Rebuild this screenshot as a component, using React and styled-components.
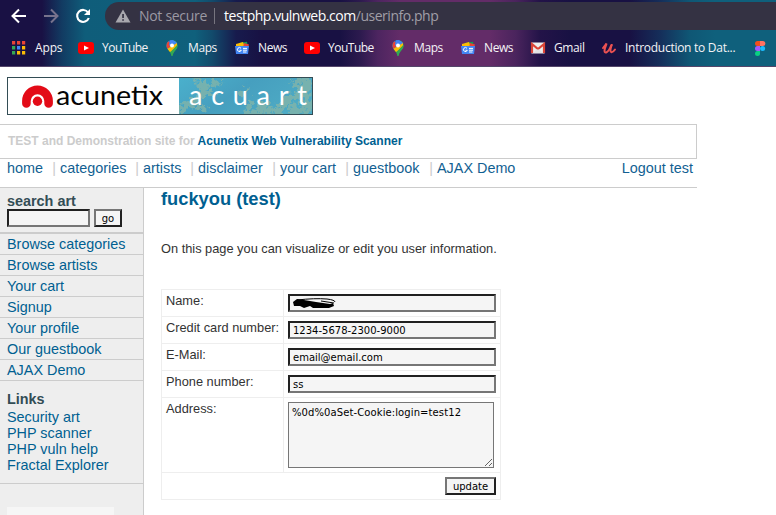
import React from "react";
import styled, { createGlobalStyle } from "styled-components";

const GlobalStyle = createGlobalStyle`
  * { box-sizing: border-box; }
  body { margin: 0; background: #fff; overflow: hidden; font-family: "Liberation Sans", Arial, sans-serif; }
`;

const Window = styled.div`
  width: 776px;
  height: 515px;
  overflow: hidden;
  display: flex;
  flex-direction: column;
`;

const Chrome = styled.header`
  flex: none;
  height: 67px;
  border-bottom: 1px solid #54466a;
  padding-top: 2px;
  background: linear-gradient(90deg, #191144 0, #191144 42px, #123b62 62px, #0f5d7a 85px, #0f607c 195px, #124b6c 212px, #171b4d 236px, #181143 262px, #181143 340px, #2c1a4e 360px, #4d2560 378px, #632c68 400px, #632c68 490px, #4a245d 516px, #231348 540px, #181143 570px, #181143 630px, #152e5a 660px, #0f5775 690px, #0f607c 715px, #0f607c 776px);
`;

const Toolbar = styled.div`
  display: flex;
  height: 28px;
`;

const NavButtons = styled.div`
  width: 105px;
  flex: none;
  display: grid;
  grid-template-columns: 32px 32px 32px;
  padding-left: 3px;
  align-items: center;
  justify-items: center;
`;

const AddressBar = styled.div`
  flex: 1;
  display: flex;
  align-items: center;
  padding-left: 10px;
  background: #343243;
  border-radius: 14px 0 0 14px;
  font: 14px/28px "Open Sans", "Noto Sans", sans-serif;
  white-space: nowrap;
`;

const SecurityLabel = styled.span`
  width: 75px;
  margin-left: 8px;
  color: #9b99a3;
  letter-spacing: -0.3px;
`;

const AddressDivider = styled.i`
  width: 1px;
  height: 16px;
  background: #77757f;
  margin-right: 9px;
`;

const Url = styled.span`
  color: #fff;
  letter-spacing: -0.47px;
`;

const UrlPath = styled.span`
  color: #a09ea7;
`;

const BookmarkBar = styled.nav`
  display: flex;
  height: 36px;
  padding-left: 11px;
`;

const Bookmark = styled.div`
  width: ${(p) => p.$width}px;
  flex: none;
  display: flex;
  align-items: center;
  gap: 8px;
  color: #f4f3f6;
  font: 12px/36px "Open Sans", "Noto Sans", sans-serif;
  letter-spacing: ${(p) => p.$tracking || 0}px;
  white-space: nowrap;
  svg { flex: none; }
`;

const Page = styled.div`
  flex: 1;
  display: flex;
  flex-direction: column;
  width: 697px;
  padding-top: 10px;
`;

const LogoLink = styled.div`
  height: 38px;
  margin: 0 0 9px 7px;
  flex: none;
  svg { display: block; }
`;

const Banner = styled.div`
  flex: none;
  height: 35px;
  border: 1px solid #ccc;
  border-left: 0;
  padding-left: 8px;
  font: bold 12px/33px "Liberation Sans", Arial, sans-serif;
  color: #ccc;
  white-space: nowrap;
`;

const BannerLink = styled.span`
  color: #005f91;
`;

const Menu = styled.nav`
  flex: none;
  height: 29px;
  border-bottom: 1px solid #ccc;
  padding: 0 4px 0 7px;
  display: flex;
  font-size: 14.4px;
  line-height: 18px;
  color: #125f92;
`;

const MenuItem = styled.div`
  width: ${(p) => p.$width}px;
  display: flex;
  justify-content: space-between;
  padding-right: 4px;
  white-space: nowrap;
`;

const MenuSeparator = styled.span`
  color: #ccc;
`;

const Logout = styled.div`
  margin-left: auto;
  white-space: nowrap;
`;

const Columns = styled.div`
  flex: 1;
  display: flex;
`;

const Sidebar = styled.aside`
  width: 144px;
  flex: none;
  background: #eee;
  border-right: 1px solid #ccc;
  color: #005f91;
  font-size: 14.4px;
`;

const SearchBox = styled.div`
  height: 46px;
  padding: 5px 0 0 7px;
  border-bottom: 2px solid #ccc;
`;

const SideHeading = styled.h3`
  margin: 0;
  color: #334d55;
  font-size: 14.4px;
  line-height: 16px;
`;

const SearchRow = styled.div`
  display: flex;
  gap: 4px;
`;

const Field = styled.input`
  display: block;
  width: ${(p) => p.$width}px;
  height: 18px;
  padding: 1px 3px 0;
  border: 2px inset #767676;
  border-radius: 0;
  background: #f5f5f5;
  font: 10px "DejaVu Sans", Verdana, sans-serif;
  letter-spacing: ${(p) => p.$tracking || 0}px;
  color: #000;
  outline: 0;
`;

const PushButton = styled.button`
  width: ${(p) => p.$width}px;
  height: 18px;
  padding: 1px 0 0;
  border: 2px outset #767676;
  border-radius: 0;
  background: #f5f5f5;
  color: #000;
  font: 10px/13px "DejaVu Sans", Verdana, sans-serif;
`;

const SideItem = styled.div`
  height: 21px;
  padding-left: 7px;
  border-bottom: 1px solid #ccc;
  line-height: 20px;
`;

const LinkBlock = styled.div`
  height: 103px;
  padding: 10px 0 0 7px;
  border-bottom: 1px solid #ccc;
  line-height: 16px;
`;

const LinkList = styled.div`
  padding-top: 2px;
`;

const AdPanel = styled.div`
  width: 107px;
  height: 8px;
  margin: 23px 0 0 7px;
  background: #f6f6f6;
`;

const Content = styled.main`
  padding-left: 17px;
  color: #333;
`;

const Title = styled.h2`
  margin: 0;
  height: 52px;
  color: #005f91;
  font-size: 18.3px;
  line-height: 22px;
`;

const Intro = styled.p`
  margin: 0;
  height: 49px;
  font-size: 12.8px;
  line-height: 17px;
  white-space: nowrap;
`;

const Form = styled.div`
  width: 340px;
  border: 1px solid #eee;
`;

const FormRow = styled.div`
  display: grid;
  grid-template-columns: 122px 1fr;
  height: ${(p) => p.$height}px;
  border-bottom: 1px solid #eee;
`;

const LabelCell = styled.label`
  padding: 3px 0 0 4px;
  border-right: 1px solid #eee;
  font-size: 12.8px;
  line-height: 15px;
  white-space: nowrap;
`;

const InputCell = styled.div`
  padding: 4px;
  position: relative;
`;

const Scribble = styled.svg`
  position: absolute;
  left: 8px;
  top: 7px;
`;

const AddressArea = styled.textarea`
  display: block;
  width: 206px;
  height: 66px;
  padding: 3px 3px;
  border: 1px solid #767676;
  border-radius: 0;
  background: #f5f5f5;
  color: #000;
  font: 10px/13px "DejaVu Sans", Verdana, sans-serif;
  letter-spacing: 0.1px;
  outline: 0;
`;

const ActionRow = styled.div`
  display: flex;
  justify-content: flex-end;
  height: 26px;
  padding: 4px;
`;

function ArrowIcon({ forward }) {
  return (
    <svg width="16" height="16" viewBox="0 0 16 16" fill="none" stroke={forward ? "#77738d" : "#fff"} strokeWidth="2">
      <path d={forward ? "M1 8H14M8 1.5L14.5 8L8 14.5" : "M15 8H2M8 1.5L1.5 8L8 14.5"} />
    </svg>
  );
}

function ReloadIcon() {
  return (
    <svg width="16" height="16" viewBox="0 0 16 16">
      <path d="M13.1 4.5A6 6 0 1 0 13.8 10" fill="none" stroke="#fff" strokeWidth="2.1" />
      <path d="M15 1V7H9Z" fill="#fff" />
    </svg>
  );
}

function WarningIcon() {
  return (
    <svg width="16" height="14" viewBox="0 0 16 14">
      <path d="M8 .5L15.5 13.5H.5Z" fill="#a8a7ae" />
      <path d="M7.2 5h1.7v4H7.2zM7.2 10.2h1.7v1.6H7.2z" fill="#343243" />
    </svg>
  );
}

function AppsIcon() {
  const colors = ["#ea4335", "#ea4335", "#ea4335", "#34a853", "#4285f4", "#fbbc05", "#34a853", "#fbbc05", "#fbbc05"];
  return (
    <svg width="16" height="16">
      {colors.map((c, i) => (
        <rect key={i} x={1 + (i % 3) * 5} y={1 + Math.floor(i / 3) * 5} width="3.2" height="3.5" fill={c} />
      ))}
    </svg>
  );
}

function YouTubeIcon() {
  return (
    <svg width="16" height="16">
      <rect y="2" width="16" height="12" rx="3" fill="#f00" />
      <path d="M6 5.4V10.6L11 8Z" fill="#fff" />
    </svg>
  );
}

function MapsIcon() {
  return (
    <svg width="16" height="16" viewBox="0 0 16 16">
      <defs>
        <clipPath id="pin">
          <path d="M8 0a5.5 5.5 0 0 1 5.5 5.5C13.5 10 9.5 10.5 8.7 15.3Q8 16.5 7.3 15.3C6.5 10.5 2.5 10 2.5 5.5A5.5 5.5 0 0 1 8 0Z" />
        </clipPath>
      </defs>
      <g clipPath="url(#pin)">
        <path d="M0 0H16V16H0Z" fill="#34a853" />
        <path d="M0 0H10L8 5L3 11Z" fill="#1a73e8" />
        <path d="M0 0L5 1.6L8 5.5L3 9L1 6Z" fill="#ea4335" />
        <path d="M9 0L14 3L8 8L5 5L6 0Z" fill="#4285f4" />
        <path d="M3 9L13 3L13 6L5 13Z" fill="#fbbc04" />
        <path d="M14 4L7 12L6 16H16Z" fill="#34a853" />
      </g>
      <circle cx="8" cy="5.4" r="2" fill="#fff" />
    </svg>
  );
}

function NewsIcon() {
  return (
    <svg width="16" height="16">
      <path d="M5 3L13 1.8L14 7H5Z" fill="#0c9d58" />
      <path d="M2 4L9 2L11 7H2Z" fill="#fbbc04" />
      <path d="M10 3L15 4.5L14 8H9Z" fill="#ea4335" />
      <path d="M1 6H15L14 14H2Z" fill="#4285f4" />
      <path d="M7 8.3A2 2 0 1 0 7.3 10.3H5.5M9 8.4H13M9 10.2H13M9 12H12.5" stroke="#fff" fill="none" />
    </svg>
  );
}

function GmailIcon() {
  return (
    <svg width="16" height="16">
      <rect x="1" y="2.5" width="14" height="11" rx="1" fill="#eee" />
      <path d="M2 13V4L8 9L14 4V13" stroke="#db4437" strokeWidth="2.2" fill="none" />
      <path d="M3.2 13L7 9L8 10L9 9L12.8 13Z" fill="#e3e3e3" />
    </svg>
  );
}

function UdemyIcon() {
  return (
    <svg width="16" height="16" fill="none" stroke="#ec5252" strokeLinecap="round">
      <path d="M2 8L5.5 3.5C5 6.5 3.3 8.5 3.5 11C3.7 14 7.5 12 9.3 7.5L10.6 5" strokeWidth="2" />
      <path d="M10.6 5C9.4 9 8.8 12 10.4 12.3C11.8 12.4 13 11 14 9.5" strokeWidth="2" />
    </svg>
  );
}

function FigmaIcon() {
  return (
    <svg width="16" height="16">
      <path d="M8 1H5.5a2.5 2.5 0 0 0 0 5H8Z" fill="#f24e1e" />
      <path d="M8 1h2.8a2.5 2.5 0 0 1 0 5H8Z" fill="#ff7262" />
      <path d="M8 6H5.5a2.5 2.5 0 0 0 0 5H8Z" fill="#a259ff" />
      <circle cx="10.6" cy="8.5" r="2.5" fill="#1abcfe" />
      <path d="M8 11H5.5A2.5 2.5 0 1 0 8 13.5Z" fill="#0acf83" />
    </svg>
  );
}

function SiteLogo() {
  return (
    <svg width="306" height="38" viewBox="0 0 306 38">
      <defs>
        <linearGradient id="sea" x1="0" x2="1" y1="0" y2=".4">
          <stop offset="0" stopColor="#4ab0cc" />
          <stop offset=".5" stopColor="#469fbf" />
          <stop offset="1" stopColor="#4daac4" />
        </linearGradient>
        <filter id="fractal" x="-5%" y="-5%" width="110%" height="110%" colorInterpolationFilters="sRGB">
          <feTurbulence type="fractalNoise" baseFrequency=".2" numOctaves="4" seed="4" />
          <feDisplacementMap in="SourceGraphic" scale="14" xChannelSelector="R" yChannelSelector="G" />
        </filter>
        <clipPath id="art"><rect x="172" y="1" width="133" height="36" /></clipPath>
      </defs>
      <rect x=".5" y=".5" width="305" height="37" fill="#fff" stroke="#334d55" />
      <g clipPath="url(#art)">
        <rect x="172" y="1" width="133" height="36" fill="url(#sea)" />
        <g filter="url(#fractal)" fill="none" stroke="#7fb4ab" strokeWidth="5" opacity=".85">
          <path d="M192 -6V10L198 16L188 23L180 27L170 38M194 10L214 5M189 24L199 35M196 15L208 17M170 30H186" />
          <path d="M240 12L231 20M244 22L240 37L260 34L251 24M250 34L268 29M232 40H276" />
          <path d="M303 -8L288 6L297 17L282 20L277 29L266 38M300 -6V44M296 33H282M294 20L306 28" strokeWidth="7" />
        </g>
        <text x="182" y="28" fill="#fff" fontFamily="Lato, sans-serif" fontSize="27" textLength="118">acuart</text>
      </g>
      <path d="M19.4 26.5V24A11.1 11.1 0 0 1 41.6 24V26.5" fill="none" stroke="#e30b17" strokeWidth="8.6" strokeLinecap="round" />
      <circle cx="30.5" cy="24.2" r="4.7" fill="#e30b17" />
      <text x="49" y="28" fill="#050505" fontFamily="Lato, sans-serif" fontSize="27" textLength="107" lengthAdjust="spacingAndGlyphs">acunetix</text>
    </svg>
  );
}

const bookmarks = [
  ["Apps", AppsIcon, 67, -0.15],
  ["YouTube", YouTubeIcon, 86, -0.5],
  ["Maps", MapsIcon, 70, -0.4],
  ["News", NewsIcon, 70, -0.4],
  ["YouTube", YouTubeIcon, 86, -0.5],
  ["Maps", MapsIcon, 70, -0.4],
  ["News", NewsIcon, 70, -0.4],
  ["Gmail", GmailIcon, 71, -0.4],
  ["Introduction to Dat...", UdemyIcon, 151, -0.27],
  ["", FigmaIcon, 24, 0],
];

const menu = [["home", 53], ["categories", 83], ["artists", 55], ["disclaimer", 82], ["your cart", 73], ["guestbook", 84], ["AJAX Demo", 90]];
const categories = ["Browse categories", "Browse artists", "Your cart", "Signup", "Your profile", "Our guestbook", "AJAX Demo"];
const links = ["Security art", "PHP scanner", "PHP vuln help", "Fractal Explorer"];
const fields = [["Name:", ""], ["Credit card number:", "1234-5678-2300-9000", 0], ["E-Mail:", "email@email.com", 0], ["Phone number:", "ss", 0]];

export default function App() {
  return (
    <Window>
      <GlobalStyle />
      <Chrome>
        <Toolbar>
          <NavButtons><ArrowIcon /><ArrowIcon forward /><ReloadIcon /></NavButtons>
          <AddressBar>
            <WarningIcon />
            <SecurityLabel>Not secure</SecurityLabel>
            <AddressDivider />
            <Url>testphp.vulnweb.com<UrlPath>/userinfo.php</UrlPath></Url>
          </AddressBar>
        </Toolbar>
        <BookmarkBar>
          {bookmarks.map(([name, Icon, width, tracking], i) => (
            <Bookmark key={i} $width={width} $tracking={tracking}><Icon />{name}</Bookmark>
          ))}
        </BookmarkBar>
      </Chrome>
      <Page>
        <LogoLink><SiteLogo /></LogoLink>
        <Banner>TEST and Demonstration site for <BannerLink>Acunetix Web Vulnerability Scanner</BannerLink></Banner>
        <Menu>
          {menu.map(([name, width], i) => (
            <MenuItem key={name} $width={width}>{name}{i < menu.length - 1 && <MenuSeparator>|</MenuSeparator>}</MenuItem>
          ))}
          <Logout>Logout test</Logout>
        </Menu>
        <Columns>
          <Sidebar>
            <SearchBox>
              <SideHeading>search art</SideHeading>
              <SearchRow><Field $width={83} /><PushButton $width={28}>go</PushButton></SearchRow>
            </SearchBox>
            {categories.map((name) => <SideItem key={name}>{name}</SideItem>)}
            <LinkBlock>
              <SideHeading>Links</SideHeading>
              <LinkList>{links.map((name) => <div key={name}>{name}</div>)}</LinkList>
            </LinkBlock>
            <AdPanel />
          </Sidebar>
          <Content>
            <Title>fuckyou (test)</Title>
            <Intro>On this page you can visualize or edit you user information.</Intro>
            <Form>
              {fields.map(([label, value, tracking]) => (
                <FormRow key={label} $height={27}>
                  <LabelCell>{label}</LabelCell>
                  <InputCell>
                    <Field $width={208} $tracking={tracking} defaultValue={value} />
                    {label === "Name:" && (
                      <Scribble width="46" height="12" viewBox="0 0 46 12">
                        <path d="M1 5L5 2L12 3L18 4L24 5L31 6L38 7L41 6L42 9L37 11L31 11L21 11L18 9L12 11L8 9L2 9Z" />
                        <path d="M5 3Q23 1 35 2Q43 3 43 5M29 4L42 6" fill="none" stroke="#000" />
                      </Scribble>
                    )}
                  </InputCell>
                </FormRow>
              ))}
              <FormRow $height={75}>
                <LabelCell>Address:</LabelCell>
                <InputCell><AddressArea defaultValue="%0d%0aSet-Cookie:login=test12" /></InputCell>
              </FormRow>
              <ActionRow><PushButton $width={51}>update</PushButton></ActionRow>
            </Form>
          </Content>
        </Columns>
      </Page>
    </Window>
  );
}
